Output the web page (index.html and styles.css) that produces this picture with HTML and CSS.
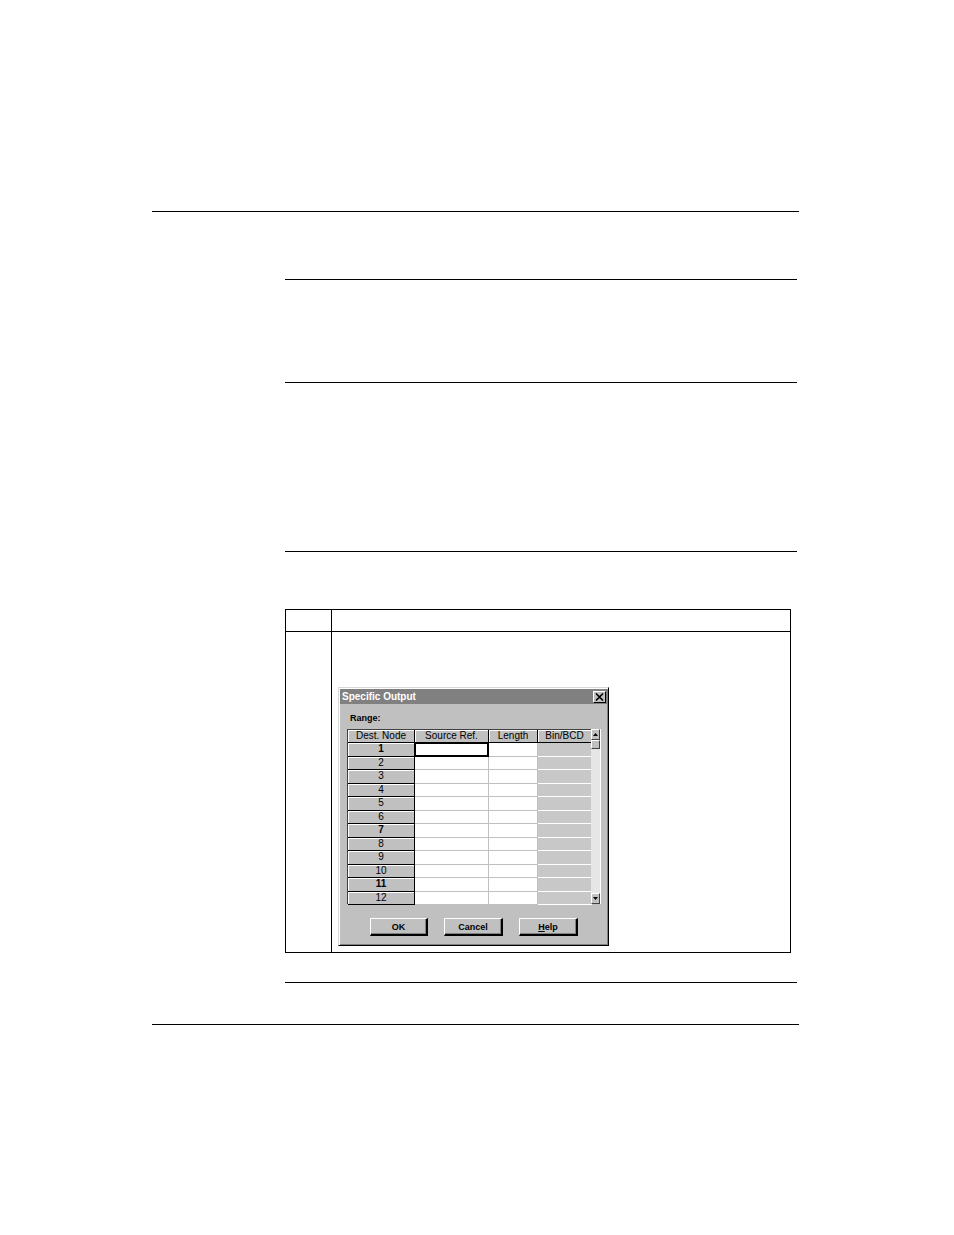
FILE: index.html
```html
<!DOCTYPE html>
<html>
<head>
<meta charset="utf-8">
<link rel="stylesheet" href="styles.css">
</head>
<body>
<div class="page">
  <div class="rule-full"></div>
  <div class="content">
    <div class="rule r2"></div>
    <div class="rule r3"></div>
    <div class="rule r4"></div>
    <div class="steps">
      <div class="c-head c-num"></div>
      <div class="c-head c-text"></div>
      <div class="c-body c-num"></div>
      <div class="c-body c-text">
        <div class="dialog">
          <div class="titlebar">
            <span class="title">Specific Output</span>
            <span class="closebtn"><svg width="9" height="8" viewBox="0 0 9 8"><path d="M1 0.5 L8 7.5 M8 0.5 L1 7.5" stroke="#000" stroke-width="1.6"/></svg></span>
          </div>
          <div class="range">Range:</div>
          <div class="gridwrap">
            <div class="grid">
              <div class="h">Dest. Node</div><div class="h">Source Ref.</div><div class="h">Length</div><div class="h">Bin/BCD</div>
              <div class="n b">1</div><div class="w focus"></div><div class="w"></div><div class="g"></div>
              <div class="n">2</div><div class="w"></div><div class="w"></div><div class="g"></div>
              <div class="n">3</div><div class="w"></div><div class="w"></div><div class="g"></div>
              <div class="n">4</div><div class="w"></div><div class="w"></div><div class="g"></div>
              <div class="n">5</div><div class="w"></div><div class="w"></div><div class="g"></div>
              <div class="n">6</div><div class="w"></div><div class="w"></div><div class="g"></div>
              <div class="n b">7</div><div class="w"></div><div class="w"></div><div class="g"></div>
              <div class="n">8</div><div class="w"></div><div class="w"></div><div class="g"></div>
              <div class="n">9</div><div class="w"></div><div class="w"></div><div class="g"></div>
              <div class="n">10</div><div class="w"></div><div class="w"></div><div class="g"></div>
              <div class="n b">11</div><div class="w"></div><div class="w"></div><div class="g"></div>
              <div class="n">12</div><div class="w"></div><div class="w"></div><div class="g"></div>
            </div>
            <div class="scroll">
              <div class="sbtn"><svg width="5" height="3" viewBox="0 0 5 3"><path d="M2.5 0 L5 3 L0 3 Z" fill="#000"/></svg></div>
              <div class="thumb"></div>
              <div class="track"></div>
              <div class="sbtn"><svg width="5" height="3" viewBox="0 0 5 3"><path d="M0 0 L5 0 L2.5 3 Z" fill="#000"/></svg></div>
            </div>
          </div>
          <div class="buttons">
            <div class="btn">OK</div>
            <div class="btn">Cancel</div>
            <div class="btn"><u>H</u>elp</div>
          </div>
        </div>
      </div>
    </div>
    <div class="rule r5"></div>
  </div>
  <div class="rule-full r6"></div>
</div>
</body>
</html>
```
FILE: styles.css
```css
html, body {
  margin: 0;
  padding: 0;
  background: #fff;
}
.page {
  width: 954px;
  height: 1235px;
  padding-top: 211px;
  box-sizing: border-box;
  font-family: "Liberation Sans", Arial, sans-serif;
}
.rule-full {
  margin-left: 152px;
  width: 647px;
  border-top: 1px solid #000;
}
.r6 { margin-top: 41px; }
.content {
  margin-left: 285px;
  width: 512px;
}
.rule {
  border-top: 1px solid #000;
}
.r2 { margin-top: 67px; }
.r3 { margin-top: 102px; }
.r4 { margin-top: 168px; }
.r5 { margin-top: 29px; }

.steps {
  margin-top: 57px;
  width: 506px;
  height: 344px;
  box-sizing: border-box;
  border: 1px solid #000;
  display: grid;
  grid-template-columns: 46px 1fr;
  grid-template-rows: 22px 1fr;
}
.c-num { border-right: 1px solid #000; }
.c-head { border-bottom: 1px solid #000; }
.c-body.c-text {
  padding: 55px 0 0 6px;
}

.dialog {
  width: 271px;
  height: 259px;
  box-sizing: border-box;
  background: #c0c0c0;
  border: 1px solid;
  border-color: #d8d8d8 #000 #000 #d8d8d8;
  box-shadow: inset 1px 1px 0 #fff, inset -1px -1px 0 #808080;
  padding: 1px;
  font-size: 10px;
  color: #000;
}
.titlebar {
  height: 15px;
  background: #808080;
  display: flex;
  align-items: center;
  justify-content: space-between;
  padding: 0 1px 0 2px;
}
.title {
  color: #fff;
  font-weight: bold;
  font-size: 10px;
}
.closebtn {
  width: 13px;
  height: 12px;
  box-sizing: border-box;
  background: #c0c0c0;
  border: 1px solid;
  border-color: #fff #000 #000 #fff;
  display: flex;
  align-items: center;
  justify-content: center;
}
.range {
  margin: 8px 0 0 10px;
  height: 12px;
  line-height: 12px;
  font-size: 9px;
  font-weight: bold;
}
.gridwrap {
  margin: 5px 0 0 7px;
  display: flex;
  width: 254px;
  height: 175px;
}
.grid {
  display: grid;
  grid-template-columns: 67px 74px 49px 54px;
  grid-template-rows: 13px repeat(12, 13.5px);
  border-left: 1px solid #404040;
  border-top: 1px solid #404040;
  border-bottom: 1px solid #000;
  box-sizing: border-box;
  width: 244px;
  height: 175px;
}
.grid > div {
  box-sizing: border-box;
  font-size: 10px;
  line-height: 12px;
  text-align: center;
  overflow: hidden;
}
.h {
  background: #c0c0c0;
  border-right: 1px solid #000;
  border-bottom: 1px solid #000;
  box-shadow: inset 1px 1px 0 #fff;
  line-height: 12px;
}
.n {
  background: #c0c0c0;
  border-right: 1px solid #000;
  border-bottom: 1px solid #000;
  box-shadow: inset 1px 1px 0 #fff;
  line-height: 13px;
}
.n.b { font-weight: bold; }
.w {
  background: #fff;
  border-right: 1px solid #c0c0c0;
  border-bottom: 1px solid #c0c0c0;
}
.w.focus {
  box-shadow: inset 0 0 0 1px #000;
  border-right: 1px solid #000;
  border-bottom: 1px solid #000;
}
.g {
  background: #c8c8c8;
  border-right: 1px solid #fff;
  border-bottom: 1px solid #fff;
}
.scroll {
  width: 10px;
  height: 175px;
  display: flex;
  flex-direction: column;
  background: #e6e6e6;
  border-right: 1px solid #fff;
}
.sbtn, .thumb {
  height: 11px;
  box-sizing: border-box;
  background: #c0c0c0;
  border: 1px solid;
  border-color: #fff #404040 #404040 #fff;
  display: flex;
  align-items: center;
  justify-content: center;
  flex: none;
}
.thumb { height: 9px; }
.track { flex: 1; background: #e6e6e6; }

.buttons {
  margin: 14px 0 0 30px;
  display: flex;
  gap: 16px;
}
.btn {
  width: 58px;
  height: 18px;
  box-sizing: border-box;
  background: #c0c0c0;
  border: 1px solid;
  border-color: #fff #000 #000 #fff;
  border-right-width: 2px;
  border-bottom-width: 2px;
  box-shadow: inset -1px -1px 0 #808080;
  font-size: 9px;
  font-weight: bold;
  display: flex;
  align-items: center;
  justify-content: center;
}
.btn + .btn { width: 59px; }
```
